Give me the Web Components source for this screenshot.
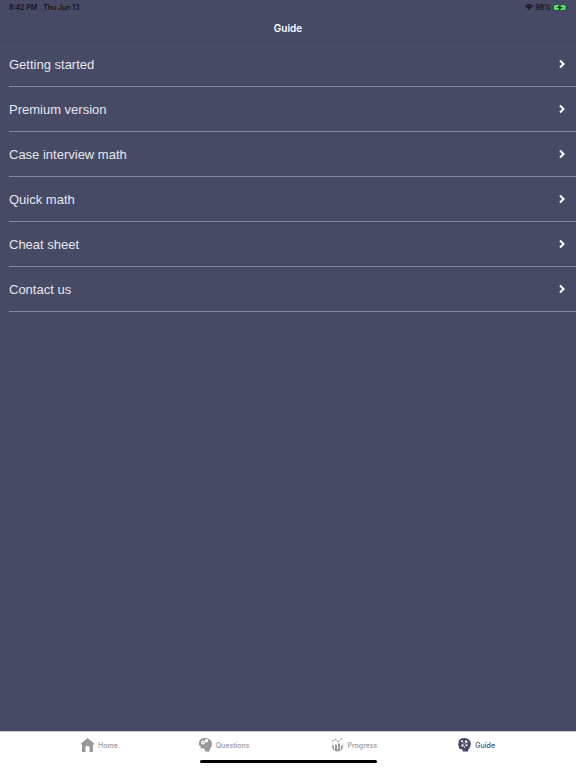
<!DOCTYPE html>
<html lang="en">
<head>
<meta charset="utf-8">
<meta name="viewport" content="width=device-width, initial-scale=1">
<title>Guide</title>
<style>
    body {
        margin: 0;
        font-family: Inter, "Liberation Sans", sans-serif;
    }
</style>
</head>
<body>
<guide-app>
    <status-bar slot="top" time="8:42 PM" date="Thu Jun 13" battery="98%"></status-bar>
    <nav-header slot="top">Guide</nav-header>
    <menu-row>Getting started</menu-row>
    <menu-row>Premium version</menu-row>
    <menu-row>Case interview math</menu-row>
    <menu-row>Quick math</menu-row>
    <menu-row>Cheat sheet</menu-row>
    <menu-row>Contact us</menu-row>
    <tab-bar slot="bottom">
        <tab-item icon="home">Home</tab-item>
        <tab-item icon="questions">Questions</tab-item>
        <tab-item icon="progress">Progress</tab-item>
        <tab-item icon="guide" active>Guide</tab-item>
    </tab-bar>
</guide-app>

<script>
function makeTemplate(html) {
    const template = document.createElement('template');
    template.innerHTML = html;
    return template;
}

class BaseElement extends HTMLElement {
    constructor() {
        super();
        this.attachShadow({mode: 'open'});
        this.shadowRoot.appendChild(this.constructor.template.content.cloneNode(true));
    }
}

class GuideApp extends BaseElement {
    static template = makeTemplate(`
        <style>
            :host {
                display: flex;
                flex-direction: column;
                min-height: 100vh;
                background: #464a65;
                color: white;
            }
            main {
                flex: 1;
            }
        </style>
        <header><slot name="top"></slot></header>
        <main><slot></slot></main>
        <slot name="bottom"></slot>
    `);
}

class StatusBar extends BaseElement {
    static template = makeTemplate(`
        <style>
            :host {
                display: flex;
                align-items: center;
                justify-content: space-between;
                height: 14px;
                padding: 0 8px 0 9px;
                color: #0c0d14;
                font-size: 7px;
                font-weight: 500;
            }
            div {
                display: flex;
                align-items: center;
            }
            .left {
                gap: 6px;
            }
            .right {
                gap: 2px;
            }
            svg {
                display: block;
            }
        </style>
        <div class="left"><span id="time"></span><span id="date"></span></div>
        <div class="right">
            <svg width="8" height="6" viewBox="0 0 16 12" fill="currentColor">
                <path d="M0 4Q8-3 16 4L14.500 6Q8 0 1.500 6ZM3 7Q8 2.500 13 7L11.500 9Q8 6 4.500 9Z"/>
                <path d="M5.500 9.500L8 12L10.500 9.500Q8 7.500 5.500 9.500Z"/>
            </svg>
            <span id="battery"></span>
            <svg width="15" height="7" viewBox="0 0 30 14">
                <rect x=".5" y=".5" width="26" height="13" rx="3.500" fill="none" stroke="#30364a"/>
                <rect x="2" y="2" width="23" height="10" rx="2" fill="#4ce35e"/>
                <path d="M28 5V9Q29.500 8.500 29.500 7T28 5Z" fill="#30364a"/>
                <path d="M15.500 1L7.500 8H12L11 13L19.500 6H14.500Z" fill="#0c0d14"/>
            </svg>
        </div>
    `);

    connectedCallback() {
        for (const name of ['time', 'date', 'battery']) {
            this.shadowRoot.getElementById(name).textContent = this.getAttribute(name);
        }
    }
}

class NavHeader extends BaseElement {
    static template = makeTemplate(`
        <style>
            :host {
                display: block;
                border-bottom: 1px solid #404359;
            }
            h1 {
                margin: 0;
                padding-top: 1px;
                font-size: 10px;
                font-weight: 600;
                line-height: 26px;
                text-align: center;
            }
        </style>
        <h1><slot></slot></h1>
    `);
}

class MenuRow extends BaseElement {
    static template = makeTemplate(`
        <style>
            :host {
                display: block;
                padding-left: 9px;
            }
            button {
                display: flex;
                align-items: center;
                justify-content: space-between;
                width: 100%;
                height: 45px;
                padding: 0 10px 0 0;
                background: none;
                border: none;
                border-bottom: 1px solid #858799;
                color: #e6e7ed;
                font-family: "Liberation Sans", sans-serif;
                font-size: 13px;
                font-weight: 300;
                cursor: pointer;
            }
        </style>
        <button type="button">
            <slot></slot>
            <svg width="8" height="10" viewBox="0 0 8 10" fill="none" stroke="white" stroke-width="2" aria-hidden="true">
                <path d="M2 1.500L5.500 5L2 8.500"/>
            </svg>
        </button>
    `);
}

class TabBar extends BaseElement {
    static template = makeTemplate(`
        <style>
            :host {
                display: block;
                padding-bottom: 5px;
                background: white;
                border-top: 1px solid #c9cad2;
            }
            nav {
                display: flex;
                justify-content: space-evenly;
                height: 28px;
            }
            .indicator {
                width: 177px;
                height: 3px;
                margin: 0 auto;
                background: black;
                border-radius: 2px;
            }
        </style>
        <nav><slot></slot></nav>
        <div class="indicator"></div>
    `);
}

const icons = {
    home: `<path d="M13 0L0 11V13H2V28H9V18Q13 13 17 18V28H24V13H26V11Z"/>`,
    questions: `
        <path fill-rule="evenodd" d="M11 0Q0 1 0 9V13Q0 16 3 16V20Q6 22 9 20Q12 21 12 27H21Q21 22 24 19Q27 13 25 7Q21 0 11 0ZM8 5A4 4 0 1 0 8 13A4 4 0 1 0 8 5ZM15 2A3.500 3.500 0 1 0 15 9A3.500 3.500 0 1 0 15 2Z"/>
        <circle cx="8" cy="9" r="1.500"/>`,
    progress: `
        <path d="M3 15V21Q7 27 13 27T23 21V15H20V23H18V11H14V23H12V13H8V23H6V15Z"/>
        <g fill="none" stroke="currentColor" stroke-width="1">
            <path d="M3 6L9 3L14 7L21 2"/>
            <path d="M3 11Q0 19 5 24M23 11Q26 19 21 24"/>
        </g>
        <circle cx="3" cy="6" r="1.500"/><circle cx="9" cy="3" r="1.500"/>
        <circle cx="14" cy="7" r="1.500"/><circle cx="21" cy="2" r="1.500"/>`,
    guide: `
        <path d="M13 0Q1 0 1 10L0 15L2 16V21Q5 23 8 22L10 27H20Q20 22 23 20Q27 14 25 7Q21 0 13 0Z"/>
        <g fill="white">
            <rect x="6" y="5" width="4" height="3"/><rect x="14" y="5" width="4" height="4"/>
            <rect x="7" y="13" width="4" height="4"/><rect x="15" y="13" width="4" height="3"/>
            <circle cx="13" cy="18" r="1.500"/><circle cx="20" cy="8" r="1"/>
        </g>
        <path d="M9 8L12 11L9 14M16 8V13" fill="none" stroke="white" stroke-width="1"/>`
};

class TabItem extends BaseElement {
    static template = makeTemplate(`
        <style>
            :host {
                display: block;
                color: #999;
            }
            :host([active]) {
                color: #464a65;
            }
            a {
                display: flex;
                align-items: center;
                gap: 4px;
                height: 26px;
                color: inherit;
                font-size: 7px;
                font-weight: 500;
                text-decoration: none;
            }
            svg {
                display: block;
            }
        </style>
        <a href="#">
            <svg width="13" height="14" viewBox="0 0 26 28" fill="currentColor" aria-hidden="true"></svg>
            <slot></slot>
        </a>
    `);

    connectedCallback() {
        const icon = this.getAttribute('icon');
        this.shadowRoot.querySelector('a').href = '#' + icon;
        this.shadowRoot.querySelector('svg').innerHTML = icons[icon];
    }
}

window.customElements.define('guide-app', GuideApp);
window.customElements.define('status-bar', StatusBar);
window.customElements.define('nav-header', NavHeader);
window.customElements.define('menu-row', MenuRow);
window.customElements.define('tab-bar', TabBar);
window.customElements.define('tab-item', TabItem);
</script>
</body>
</html>
